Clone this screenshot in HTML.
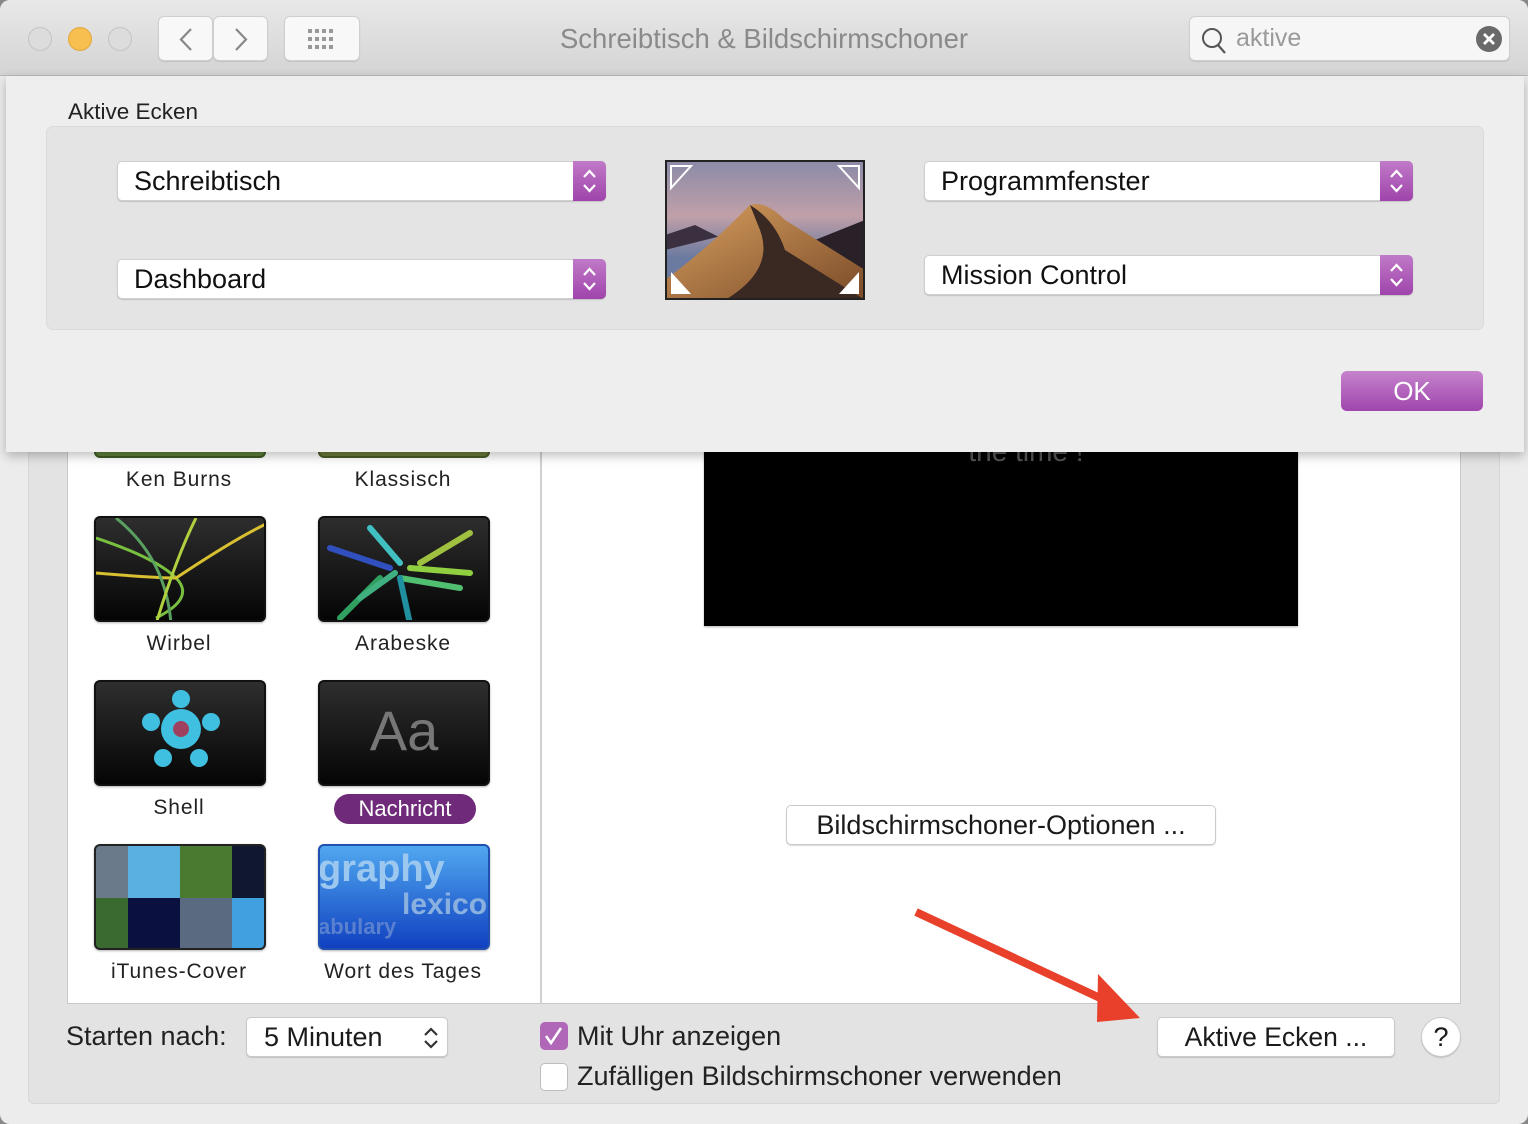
<!DOCTYPE html>
<html><head><meta charset="utf-8"><style>
*{box-sizing:border-box;margin:0;padding:0}
body{width:1528px;height:1124px;overflow:hidden;background:#888;font-family:"Liberation Sans",sans-serif;position:relative}
.a{position:absolute}
.win{left:0;top:0;width:1528px;height:1124px;background:#ececec;border-radius:10px;overflow:hidden}
.title{left:0;top:0;width:1528px;height:76px;background:linear-gradient(#e8e8e8,#d4d4d4);border-bottom:1px solid #b9b9b9}
.dot{width:24px;height:24px;border-radius:50%;top:27px;background:#dcdcdc;border:1px solid #c4c4c4}
.tb{top:16px;height:45px;background:#f8f8f8;border:1px solid #cfcfcf;border-radius:6px;box-shadow:0 1px 1px rgba(0,0,0,.1)}
.lbl{font-size:21px;color:#222;text-align:center;width:240px;letter-spacing:.9px}
.th{width:172px;height:106px;border-radius:6px;border:2px solid #111;background:linear-gradient(#2e2e2e,#050505);overflow:hidden;box-shadow:0 1px 2px rgba(0,0,0,.3)}
.pop{height:40px;background:#fff;border:1px solid #cfcfcf;border-radius:5px;box-shadow:0 1px 1px rgba(0,0,0,.15);font-size:27px;color:#111;padding:4px 0 0 16px}
.pop .st{position:absolute;right:-1px;top:-1px;width:33px;height:40px;border-radius:0 5px 5px 0;background:linear-gradient(#c07ac8,#9f44ab)}
.btn{background:#fff;border:1px solid #cacaca;border-radius:5px;box-shadow:0 1px 1px rgba(0,0,0,.15);font-size:27px;color:#1a1a1a;text-align:center}
</style></head><body>
<div class="a win">
 <div class="a title">
  <div class="a dot" style="left:28px"></div>
  <div class="a dot" style="left:68px;background:#f6bf4f;border-color:#e0a83a"></div>
  <div class="a dot" style="left:108px"></div>
  <div class="a tb" style="left:158px;width:55px"><svg width="55" height="45"><path d="M32 12 L22 22.5 L32 33" fill="none" stroke="#888" stroke-width="2.2"/></svg></div>
  <div class="a tb" style="left:213px;width:55px"><svg width="55" height="45"><path d="M22 12 L32 22.5 L22 33" fill="none" stroke="#888" stroke-width="2.2"/></svg></div>
  <div class="a tb" style="left:284px;width:76px"><svg width="76" height="45"><g fill="#999"><rect x="23" y="12" width="4" height="4"/><rect x="30" y="12" width="4" height="4"/><rect x="37" y="12" width="4" height="4"/><rect x="44" y="12" width="4" height="4"/><rect x="23" y="20" width="4" height="4"/><rect x="30" y="20" width="4" height="4"/><rect x="37" y="20" width="4" height="4"/><rect x="44" y="20" width="4" height="4"/><rect x="23" y="28" width="4" height="4"/><rect x="30" y="28" width="4" height="4"/><rect x="37" y="28" width="4" height="4"/><rect x="44" y="28" width="4" height="4"/></g></svg></div>
  <div class="a" style="left:0;width:1528px;top:23px;text-align:center;font-size:27.5px;color:#8a8a8a">Schreibtisch &amp; Bildschirmschoner</div>
  <div class="a tb" style="left:1189px;width:321px;background:#f6f6f6">
   <svg class="a" style="left:10px;top:8px" width="30" height="30"><circle cx="12" cy="13" r="9" fill="none" stroke="#555" stroke-width="2"/><path d="M18 20 L25 28" stroke="#555" stroke-width="2.2"/></svg>
   <div class="a" style="left:46px;top:7px;font-size:25px;color:#9a9a9a">aktive</div>
   <svg class="a" style="left:285px;top:8px" width="28" height="28"><circle cx="14" cy="14" r="13" fill="#6a6a6a"/><path d="M9 9 L19 19 M19 9 L9 19" stroke="#fff" stroke-width="2.8"/></svg>
  </div>
 </div>
 <div class="a" style="left:28px;top:440px;width:1472px;height:664px;background:#e3e3e3;border-radius:6px;border:1px solid #d6d6d6"></div>
 <div class="a" style="left:67px;top:440px;width:1394px;height:564px;background:#fff;border:1px solid #c8c8c8;border-top:none"></div>
 <div class="a" style="left:540px;top:440px;width:2px;height:564px;background:#d0d0d0"></div>
 <div class="a" style="left:94px;top:440px;width:172px;height:18px;background:#5c7f3a;border-radius:0 0 6px 6px;border:2px solid #3d5a25;border-top:none"></div>
 <div class="a" style="left:318px;top:440px;width:172px;height:18px;background:#6a7a3a;border-radius:0 0 6px 6px;border:2px solid #4a5a25;border-top:none"></div>
 <div class="a lbl" style="left:59px;top:468px">Ken Burns</div>
 <div class="a lbl" style="left:283px;top:468px">Klassisch</div>
 <div class="a th" style="left:94px;top:516px"><svg width="172" height="106"><g fill="none" stroke-width="3"><path d="M0 20 Q60 40 80 60 Q100 80 60 100" stroke="#7ac040"/><path d="M0 55 Q60 60 80 60 Q140 20 172 5" stroke="#d8c030"/><path d="M20 0 Q70 40 75 106" stroke="#5aa060"/><path d="M100 0 Q80 40 60 106" stroke="#b0d040"/></g></svg></div>
 <div class="a th" style="left:318px;top:516px"><svg width="172" height="106"><g stroke-width="6" stroke-linecap="round"><path d="M10 30 L70 50" stroke="#3050c0"/><path d="M50 10 L80 45" stroke="#40c0c0"/><path d="M90 50 L150 55" stroke="#90d040"/><path d="M80 60 L140 70" stroke="#50c070"/><path d="M60 60 L20 100" stroke="#30a060"/><path d="M80 60 L90 106" stroke="#2090a0"/><path d="M100 45 L150 15" stroke="#a0c040"/><path d="M75 55 L40 80" stroke="#40b080"/></g></svg></div>
 <div class="a lbl" style="left:59px;top:632px">Wirbel</div>
 <div class="a lbl" style="left:283px;top:632px">Arabeske</div>
 <div class="a th" style="left:94px;top:680px"><svg width="172" height="106"><g fill="#40c0e0"><circle cx="85" cy="47" r="20"/><circle cx="85" cy="17" r="9"/><circle cx="55" cy="40" r="9"/><circle cx="115" cy="40" r="9"/><circle cx="67" cy="76" r="9"/><circle cx="103" cy="76" r="9"/></g><circle cx="85" cy="47" r="8" fill="#a04060"/></svg></div>
 <div class="a th" style="left:318px;top:680px"><div style="font-size:56px;color:#777;text-align:center;margin-top:16px">Aa</div></div>
 <div class="a lbl" style="left:59px;top:796px">Shell</div>
 <div class="a" style="left:334px;top:794px;width:142px;height:30px;border-radius:15px;background:#6f2a79;color:#fff;font-size:22px;text-align:center;line-height:29px">Nachricht</div>
 <div class="a th" style="left:94px;top:844px;border-color:#222;background:#223"><div class="a" style="left:0;top:0;width:32px;height:52px;background:#6a7a8a"></div><div class="a" style="left:32px;top:0;width:52px;height:52px;background:#5ab0e0"></div><div class="a" style="left:84px;top:0;width:52px;height:52px;background:#4a7a30"></div><div class="a" style="left:136px;top:0;width:36px;height:52px;background:#101830"></div><div class="a" style="left:0;top:52px;width:32px;height:54px;background:#3a6a30"></div><div class="a" style="left:32px;top:52px;width:52px;height:54px;background:#0a1040"></div><div class="a" style="left:84px;top:52px;width:52px;height:54px;background:#5a6a80"></div><div class="a" style="left:136px;top:52px;width:36px;height:54px;background:#40a0e0"></div></div>
 <div class="a th" style="left:318px;top:844px;border-color:#2050b0;background:linear-gradient(#50a8f0,#1040c0)"><div class="a" style="left:-2px;top:2px;font-size:38px;color:#9cc8f0;font-weight:bold">graphy</div><div class="a" style="left:82px;top:42px;font-size:30px;color:#8ab0e0;font-weight:bold">lexicog</div><div class="a" style="left:-2px;top:68px;font-size:22px;color:#5a80d0;font-weight:bold">abulary</div></div>
 <div class="a lbl" style="left:59px;top:960px">iTunes-Cover</div>
 <div class="a lbl" style="left:283px;top:960px">Wort des Tages</div>
 <div class="a" style="left:704px;top:440px;width:594px;height:186px;background:#000;box-shadow:0 1px 2px rgba(0,0,0,.3)"><div style="text-align:center;color:#555;font-size:28px;margin-top:-4px;padding-left:50px">the time !</div></div>
 <div class="a btn" style="left:786px;top:805px;width:430px;height:40px;line-height:38px">Bildschirmschoner-Optionen ...</div>
 <svg class="a" style="left:900px;top:900px" width="270" height="130"><path d="M16 12 L215 105" stroke="#e8402a" stroke-width="8"/><path d="M198 74 L240 118 L197 122 Z" fill="#e8402a"/></svg>
 <div class="a" style="left:66px;top:1021px;font-size:27px;color:#222">Starten nach:</div>
 <div class="a btn" style="left:246px;top:1017px;width:202px;height:40px;text-align:left;padding-left:17px;line-height:38px">5 Minuten<svg class="a" style="right:6px;top:6px" width="20" height="28"><path d="M4 11 L10 5 L16 11 M4 17 L10 23 L16 17" fill="none" stroke="#333" stroke-width="2.2"/></svg></div>
 <div class="a" style="left:540px;top:1022px;width:28px;height:28px;border-radius:5px;background:#b067b8"><svg width="28" height="28"><path d="M6 14 L11 21 L21 6" fill="none" stroke="#fff" stroke-width="2.5"/></svg></div>
 <div class="a" style="left:577px;top:1021px;font-size:27px;color:#222">Mit Uhr anzeigen</div>
 <div class="a" style="left:540px;top:1063px;width:28px;height:28px;border-radius:5px;background:#fff;border:1px solid #bdbdbd"></div>
 <div class="a" style="left:577px;top:1061px;font-size:27px;color:#222">Zufälligen Bildschirmschoner verwenden</div>
 <div class="a btn" style="left:1157px;top:1017px;width:238px;height:40px;line-height:38px;font-size:26.5px">Aktive Ecken ...</div>
 <div class="a btn" style="left:1421px;top:1017px;width:40px;height:40px;border-radius:50%;line-height:38px">?</div>
 <div class="a" style="left:6px;top:76px;width:1518px;height:376px;background:#eeeeee;box-shadow:0 4px 10px rgba(0,0,0,.25)">
  <div class="a" style="left:62px;top:23px;font-size:22.5px;color:#222">Aktive Ecken</div>
  <div class="a" style="left:40px;top:50px;width:1438px;height:204px;background:#e4e4e4;border:1px solid #dadada;border-radius:7px"></div>
  <div class="a pop" style="left:111px;top:85px;width:489px">Schreibtisch<div class="st"><svg width="33" height="40"><path d="M11 16 L16.5 10 L22 16 M11 24 L16.5 30 L22 24" fill="none" stroke="#fff" stroke-width="2.2"/></svg></div></div>
  <div class="a pop" style="left:111px;top:183px;width:489px">Dashboard<div class="st"><svg width="33" height="40"><path d="M11 16 L16.5 10 L22 16 M11 24 L16.5 30 L22 24" fill="none" stroke="#fff" stroke-width="2.2"/></svg></div></div>
  <div class="a pop" style="left:918px;top:85px;width:489px">Programmfenster<div class="st"><svg width="33" height="40"><path d="M11 16 L16.5 10 L22 16 M11 24 L16.5 30 L22 24" fill="none" stroke="#fff" stroke-width="2.2"/></svg></div></div>
  <div class="a pop" style="left:918px;top:179px;width:489px">Mission Control<div class="st"><svg width="33" height="40"><path d="M11 16 L16.5 10 L22 16 M11 24 L16.5 30 L22 24" fill="none" stroke="#fff" stroke-width="2.2"/></svg></div></div>
  <svg class="a" style="left:659px;top:84px" width="200" height="140"><defs><linearGradient id="sk" x1="0" y1="0" x2="0" y2="1"><stop offset="0" stop-color="#8a8aa8"/><stop offset=".4" stop-color="#c0a0a8"/><stop offset=".7" stop-color="#6a7aa0"/></linearGradient><linearGradient id="dn" x1="0" y1="0" x2="1" y2="1"><stop offset="0" stop-color="#d8a060"/><stop offset="1" stop-color="#7a4a28"/></linearGradient></defs><rect width="200" height="140" fill="url(#sk)"/><path d="M0 75 L30 65 L60 80 L80 70 L0 90Z" fill="#3a3040"/><path d="M150 80 L200 60 L200 140 L150 140Z" fill="#2a2028"/><path d="M0 120 Q40 90 70 60 L85 45 Q100 40 120 60 L200 110 L200 140 L0 140Z" fill="url(#dn)"/><path d="M85 45 Q110 60 120 90 L200 140 L60 140 Q110 110 95 70Z" fill="#3a2822"/><rect x="1" y="1" width="198" height="138" fill="none" stroke="#222" stroke-width="2"/><path d="M6 6 L26 6 L6 28Z" fill="none" stroke="#fff" stroke-width="2"/><path d="M194 6 L174 6 L194 28Z" fill="none" stroke="#fff" stroke-width="2"/><path d="M6 134 L26 134 L6 112Z" fill="#fff"/><path d="M194 134 L174 134 L194 112Z" fill="#fff"/></svg>
  <div class="a" style="left:1335px;top:295px;width:142px;height:40px;border-radius:6px;background:linear-gradient(#c583cc,#a046ad);color:#fff;font-size:26px;text-align:center;line-height:40px">OK</div>
 </div>
</div>
</body></html>
